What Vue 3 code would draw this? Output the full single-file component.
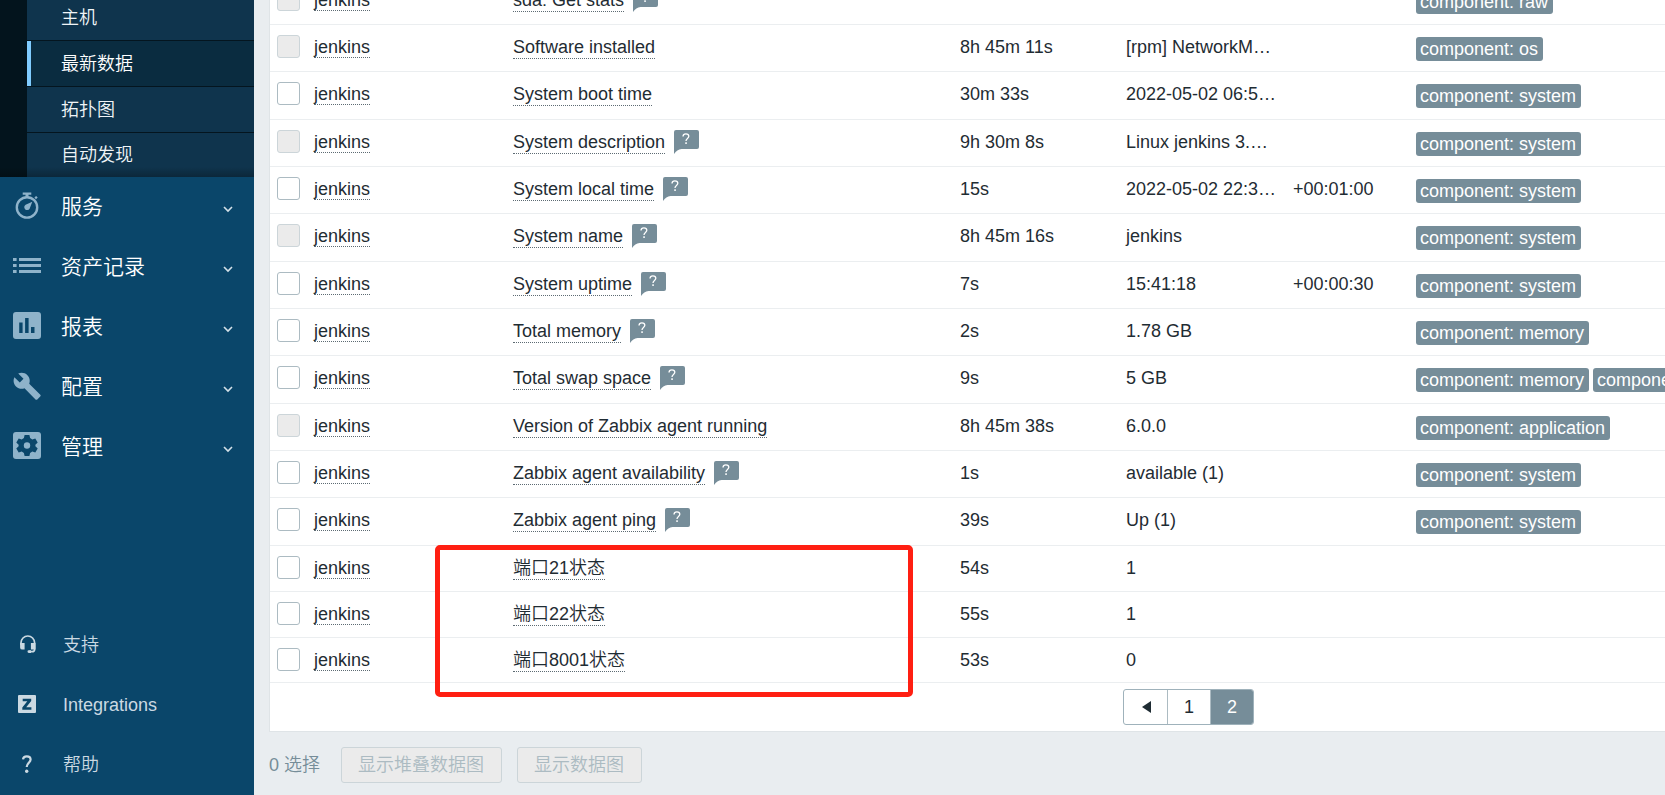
<script setup>
import { ref } from 'vue'

const submenu = ref([
  { label: '主机' },
  { label: '最新数据', active: true },
  { label: '拓扑图' },
  { label: '自动发现' },
])

const sections = ref([
  { label: '服务', icon: 'timer' },
  { label: '资产记录', icon: 'list' },
  { label: '报表', icon: 'chart' },
  { label: '配置', icon: 'wrench' },
  { label: '管理', icon: 'gear' },
])

const links = ref([
  { label: '支持', icon: 'headset' },
  { label: 'Integrations', icon: 'zed' },
  { label: '帮助', icon: 'help' },
])

const rows = ref([
  { name: 'sda: Get stats', help: true, off: true, tags: ['component: raw'] },
  { name: 'Software installed', off: true, age: '8h 45m 11s', value: '[rpm] NetworkM…', tags: ['component: os'] },
  { name: 'System boot time', age: '30m 33s', value: '2022-05-02 06:5…', tags: ['component: system'] },
  { name: 'System description', help: true, off: true, age: '9h 30m 8s', value: 'Linux jenkins 3.…', tags: ['component: system'] },
  { name: 'System local time', help: true, age: '15s', value: '2022-05-02 22:3…', change: '+00:01:00', tags: ['component: system'] },
  { name: 'System name', help: true, off: true, age: '8h 45m 16s', value: 'jenkins', tags: ['component: system'] },
  { name: 'System uptime', help: true, age: '7s', value: '15:41:18', change: '+00:00:30', tags: ['component: system'] },
  { name: 'Total memory', help: true, age: '2s', value: '1.78 GB', tags: ['component: memory'] },
  { name: 'Total swap space', help: true, age: '9s', value: '5 GB', tags: ['component: memory', 'component: storage'] },
  { name: 'Version of Zabbix agent running', off: true, age: '8h 45m 38s', value: '6.0.0', tags: ['component: application'] },
  { name: 'Zabbix agent availability', help: true, age: '1s', value: 'available (1)', tags: ['component: system'] },
  { name: 'Zabbix agent ping', help: true, age: '39s', value: 'Up (1)', tags: ['component: system'] },
  { name: '端口21状态', plain: true, age: '54s', value: '1', tags: [] },
  { name: '端口22状态', plain: true, age: '55s', value: '1', tags: [] },
  { name: '端口8001状态', plain: true, age: '53s', value: '0', tags: [] },
])
</script>

<template>
  <div class="page">
    <aside class="sidebar">
      <nav class="menu">
        <div class="submenu">
          <a v-for="item in submenu" :key="item.label" href="#" class="sub" :class="{ active: item.active }">{{ item.label }}</a>
        </div>
        <button v-for="s in sections" :key="s.label" type="button" class="section">
          <svg class="icon" viewBox="0 0 28 28" aria-hidden="true">
            <template v-if="s.icon === 'timer'">
              <path d="M9.700.4h8.600v2.400h-2.800v3h-3v-3H9.700zM21.400 5.600l1.700-1.700 1.600 1.600-1.700 1.700z" fill="currentColor" />
              <circle cx="14" cy="15.400" r="10.200" fill="none" stroke="currentColor" stroke-width="2.400" />
              <path d="M19.300 9.700l-2.700 7a2.900 2.900 0 1 1-4-4z" fill="currentColor" />
            </template>
            <path v-else-if="s.icon === 'list'" d="M0 6h3.600v3H0zM6 6h22v3H6zM0 12h3.600v3H0zM6 12h22v3H6zM0 18h3.600v3H0zM6 18h22v3H6z" fill="currentColor" />
            <path v-else-if="s.icon === 'chart'" fill-rule="evenodd" d="M3 0h22a3 3 0 0 1 3 3v21a3 3 0 0 1-3 3H3a3 3 0 0 1-3-3V3a3 3 0 0 1 3-3zM6.200 10.500V21h3.400V10.500zM12.100 6v15h3.500V6zM18 15v6h3.500v-6z" fill="currentColor" />
            <path v-else-if="s.icon === 'wrench'" d="M27.300 22.800L16.200 11.700c1.100-2.900.5-6.200-1.800-8.500C11.900.700 8.200.200 5.200 1.600l5.300 5.200-3.700 3.800L1.400 5.300c-1.500 3-.9 6.800 1.600 9.200 2.300 2.300 5.700 2.900 8.500 1.800l11 11.100c.5.500 1.300.5 1.800 0l2.900-2.800c.6-.5.6-1.400.1-1.800z" fill="currentColor" />
            <template v-else>
              <rect width="28" height="27" rx="3" fill="currentColor" />
              <path class="cut" d="M11.600 3h4.800l.7 3.100 2.200 1.300 3-1 2.400 4.200-2.300 2.100v1.600l2.300 2.100-2.400 4.200-3-1-2.200 1.300-.7 3.100h-4.800l-.7-3.100-2.200-1.300-3 1-2.400-4.200 2.300-2.100v-1.600l-2.300-2.100 2.400-4.200 3 1 2.200-1.300z" />
              <circle cx="14" cy="13.500" r="3.200" fill="currentColor" />
            </template>
          </svg>
          <span class="label">{{ s.label }}</span>
          <svg class="chevron" viewBox="0 0 10 10" aria-hidden="true"><path d="M1 3l4 4 4-4" fill="none" stroke="currentColor" stroke-width="1.600" /></svg>
        </button>
      </nav>
      <nav class="links">
        <a v-for="l in links" :key="l.label" href="#" class="link">
          <svg class="icon" viewBox="0 0 28 28" aria-hidden="true">
            <template v-if="l.icon === 'headset'">
              <path d="M8 15v-2.200a6.800 6.800 0 0 1 13.600 0v6.400c0 1.500-1.200 2.500-2.600 2.500h-3" fill="none" stroke="currentColor" stroke-width="1.700" />
              <path d="M7.100 13H11.600v6.600H9.300a2.200 2.200 0 0 1-2.200-2.200zM22.500 13H17.900v6.600h4.600zM15.800 20.300H18v2.600h-2.200a1.300 1.300 0 0 1 0-2.600z" fill="currentColor" />
            </template>
            <path v-else-if="l.icon === 'zed'" fill-rule="evenodd" d="M6 5h16a1 1 0 0 1 1 1v16a1 1 0 0 1-1 1H6a1 1 0 0 1-1-1V6a1 1 0 0 1 1-1zM9.700 8.700v2.500h4.600L9.300 17.400v2.300h9.100v-2.500h-5.200l5-6.200V8.700z" fill="currentColor" />
            <template v-else>
              <path d="M10 9.400c.2-2 1.600-3.100 3.800-3.100 2.400 0 3.800 1.200 3.800 3.300 0 3-3.900 3.500-3.900 7.400" fill="none" stroke="currentColor" stroke-width="2.200" />
              <circle cx="13.700" cy="21.200" r="1.700" fill="currentColor" />
            </template>
          </svg>
          <span>{{ l.label }}</span>
        </a>
      </nav>
    </aside>

    <main class="content">
      <form class="card" @submit.prevent>
        <table class="items">
          <colgroup>
            <col class="c-check"><col class="c-host"><col class="c-name"><col class="c-age"><col class="c-value"><col class="c-change"><col>
          </colgroup>
          <tbody>
            <tr v-for="r in rows" :key="r.name" :class="{ short: r.plain }">
              <td class="check"><input type="checkbox" :disabled="r.off" :aria-label="r.name"></td>
              <td><a href="#" class="dotted">jenkins</a></td>
              <td>
                <div class="name">
                  <a href="#" class="dotted">{{ r.name }}</a>
                  <button v-if="r.help" type="button" class="hint" :aria-label="r.name">
                    <svg viewBox="0 0 25 24" aria-hidden="true">
                      <path d="M2 0h21a2 2 0 0 1 2 2v15a2 2 0 0 1-2 2H7.500C4.500 19.500 2 21 0 24V2a2 2 0 0 1 2-2z" fill="#768d99" />
                      <path d="M9 6.500C9.100 4.700 10.200 3.800 11.900 3.800c1.800 0 2.900 1 2.900 2.500 0 2.100-2.800 2.200-2.800 4.700" fill="none" stroke="#fff" stroke-width="1.300" />
                      <path d="M11.300 12.300h1.500V14h-1.500z" fill="#fff" />
                    </svg>
                  </button>
                </div>
              </td>
              <td>{{ r.age }}</td>
              <td>{{ r.value }}</td>
              <td>{{ r.change }}</td>
              <td class="tags"><div class="taglist"><span v-for="t in r.tags" :key="t" class="tag">{{ t }}</span></div></td>
            </tr>
          </tbody>
          <tfoot>
            <tr>
              <td colspan="4"></td>
              <td colspan="3" class="pager">
                <nav class="pages">
                  <a href="#" aria-label="上一页"><svg viewBox="0 0 10 12" aria-hidden="true"><path d="M10 0v12L1 6z" fill="currentColor" /></svg></a>
                  <a href="#">1</a>
                  <a href="#" class="current">2</a>
                </nav>
              </td>
            </tr>
          </tfoot>
        </table>
        <div class="marker"></div>
      </form>
      <footer class="actions">
        <span class="count">0 选择</span>
        <button type="button" disabled>显示堆叠数据图</button>
        <button type="button" disabled>显示数据图</button>
      </footer>
    </main>
  </div>
</template>

<style>
body {
  margin: 0;
  background: #e9edf0;
}
</style>

<style scoped>
* {
  box-sizing: border-box;
}
.page {
  display: flex;
  height: 100vh;
  overflow: hidden;
  font-family: "Liberation Sans", Arial, "Noto Sans CJK SC", sans-serif;
  font-size: 18px;
  font-weight: 350;
  line-height: 24px;
  color: #1f2c33;
}
a {
  color: inherit;
  text-decoration: none;
}
button {
  font: inherit;
  cursor: pointer;
}

.sidebar {
  display: flex;
  flex-direction: column;
  flex: 0 0 254px;
  background: #0a466a;
  color: #fff;
}
.submenu {
  margin-top: -6px;
  padding-left: 27px;
  background: linear-gradient(to top, rgba(0, 0, 0, 0.25), transparent 10px), linear-gradient(to right, #03141d 27px, #0f344d 27px);
}
.sub {
  display: flex;
  align-items: center;
  height: 46px;
  padding-left: 34px;
  border-top: 1px solid #04151f;
  color: #f0f4f7;
}
.sub:last-child {
  height: 45px;
}
.sub.active {
  background: #0a2c40;
  box-shadow: inset 4px 0 #80ccff;
  color: #fff;
}
.section,
.link {
  display: flex;
  align-items: center;
  width: 100%;
  height: 60px;
  border: 0;
  background: none;
}
.section {
  padding: 0 21px 0 13px;
  color: #fff;
  font-size: 21px;
  text-align: left;
}
.icon {
  width: 28px;
  height: 28px;
  margin-bottom: 2px;
}
.section .icon {
  color: #8fb3ca;
}
.cut {
  fill: #0a466a;
}
.label {
  flex: 1;
  margin-left: 20px;
}
.chevron {
  width: 10px;
  height: 10px;
  margin-top: 4px;
  color: #d3e0e8;
}
.links {
  margin-top: auto;
}
.link {
  gap: 22px;
  padding-left: 13px;
  color: #cbd9e2;
}

.content {
  display: flex;
  flex-direction: column;
  justify-content: flex-end;
  flex: 1;
  min-width: 0;
  padding-left: 15px;
}
.card {
  position: relative;
  border: 1px solid #dfe4e7;
  border-right: 0;
  background: #fff;
}
.items {
  width: 100%;
  table-layout: fixed;
  border-spacing: 0;
}
.c-check { width: 36px; }
.c-host { width: 199px; }
.c-name { width: 447px; }
.c-age { width: 166px; }
.c-value { width: 167px; }
.c-change { width: 123px; }
td {
  height: 47px;
  padding: 10px 0 0 8px;
  border-bottom: 1px solid #ebeef0;
  vertical-align: top;
  white-space: nowrap;
}
tbody tr:nth-child(3n) td {
  height: 48px;
}
tbody tr.short td {
  height: 46px;
}
tbody tr:last-child td {
  height: 45px;
}
.check {
  padding-left: 7px;
}
input[type="checkbox"] {
  appearance: none;
  display: block;
  width: 23px;
  height: 23px;
  margin: 0;
  border: 1px solid #acbbc2;
  border-radius: 3px;
  background: #fff;
}
input[type="checkbox"]:disabled {
  border-color: #ccd5d9;
  background: #ebebeb;
}
.dotted {
  border-bottom: 1px dotted #5d6b73;
}
.name {
  display: flex;
  align-items: flex-start;
  gap: 9px;
}
.name .dotted {
  line-height: 22px;
  padding-top: 1px;
}
.hint {
  width: 25px;
  height: 24px;
  padding: 0;
  border: 0;
  background: none;
}
.hint svg {
  display: block;
}
.tags {
  padding-top: 12px;
}
.taglist {
  display: flex;
  gap: 4px;
}
.tag {
  flex: none;
  height: 24px;
  padding: 0 5px 0 4px;
  border-radius: 3px;
  background: #768d99;
  color: #fff;
  line-height: 24px;
}
tfoot td {
  height: 48px;
  border-bottom: 0;
}
.pager {
  padding: 6px 0 0 5px;
}
.pages {
  display: inline-flex;
  border: 1px solid #9fb2bb;
  border-radius: 3px;
  overflow: hidden;
}
.pages a {
  display: flex;
  align-items: center;
  justify-content: center;
  width: 43px;
  height: 34px;
}
.pages a + a {
  border-left: 1px solid #acbbc2;
}
.pages svg {
  width: 10px;
  height: 12px;
}
.pages .current {
  background: #768d99;
  color: #fff;
}
.marker {
  position: absolute;
  left: 165px;
  bottom: 34px;
  width: 478px;
  height: 152px;
  border: 5px solid #ff1f12;
  border-radius: 5px;
  pointer-events: none;
}
.actions {
  display: flex;
  align-items: center;
  gap: 15px;
  padding: 15px 0 12px;
}
.count {
  margin-right: 6px;
  color: #768d99;
}
.actions button {
  height: 36px;
  padding: 0 17px 0 16px;
  border: 1px solid #ccd5d9;
  border-radius: 3px;
  background: #ebebeb;
  color: #acbbc2;
}
</style>
